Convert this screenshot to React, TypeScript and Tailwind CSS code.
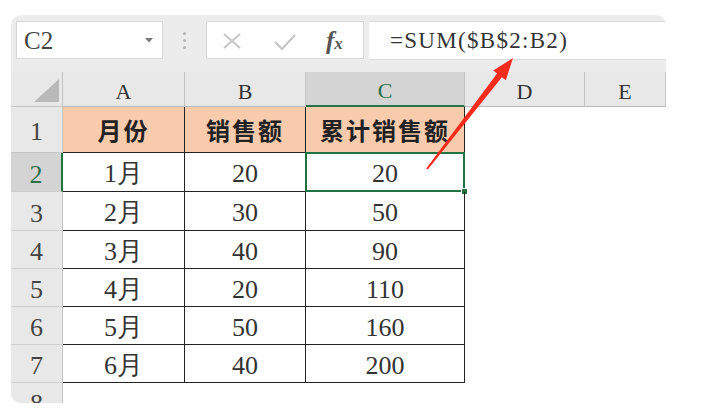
import React from 'react'

const COLS = ['A', 'B', 'C', 'D', 'E']

const ROWS: Array<{ n: number; cells: string[]; h: string }> = [
  { n: 2, cells: ['1月', '20', '20'], h: 'h-[39px]' },
  { n: 3, cells: ['2月', '30', '50'], h: 'h-[39px]' },
  { n: 4, cells: ['3月', '40', '90'], h: 'h-[38px]' },
  { n: 5, cells: ['4月', '20', '110'], h: 'h-[38px]' },
  { n: 6, cells: ['5月', '50', '160'], h: 'h-[38px]' },
  { n: 7, cells: ['6月', '40', '200'], h: 'h-[38px]' },
]

function RowHead({ n, active, h }: { n: number; active?: boolean; h: string }) {
  return (
    <div
      className={`${h} w-[52px] flex items-center justify-center border-b border-[#cfcfcf] ${
        active ? 'bg-[#d4d4d4] text-[#2b6e4b] border-r-2 border-r-[#217346]' : 'bg-[#e8e8e8] text-[#444] border-r border-r-[#c4c4c4]'
      }`}
    >
      <span className="pt-[4px] text-[26px] font-['Liberation_Serif']">{n}</span>
    </div>
  )
}

export default function App() {
  return (
    <div className="relative w-[709px] h-[415px] bg-white pl-[11px] pt-[15px] overflow-hidden font-['Liberation_Serif',serif]">
      <div className="w-[655px] h-[388px] rounded-[10px] overflow-hidden bg-[#ececec] flex flex-col">
        {/* toolbar */}
        <div className="h-[57px] shrink-0 flex items-start pt-[6px] pl-[5px]">
          <div className="w-[147px] h-[38px] bg-white border border-[#d6d6d6] flex items-center justify-between pl-[7px] pr-[9px]">
            <span className="text-[25px] text-[#444] pt-[2px] font-['Liberation_Serif']">C2</span>
            <svg width="8" height="5" viewBox="0 0 8 5">
              <path d="M0 0 L8 0 L4 4.5 Z" fill="#7a7a7a" />
            </svg>
          </div>
          <div className="w-[43px] h-[38px] flex flex-col items-center justify-center gap-[4px]">
            <div className="w-[3px] h-[3px] rounded-full bg-[#b5b5b5]" />
            <div className="w-[3px] h-[3px] rounded-full bg-[#b5b5b5]" />
            <div className="w-[3px] h-[3px] rounded-full bg-[#b5b5b5]" />
          </div>
          <div className="w-[158px] h-[38px] bg-white border border-[#d6d6d6] flex items-center pl-[15px]">
            <svg width="20" height="16" viewBox="0 0 20 16" className="mt-[2px]">
              <path d="M2 1 L18 15 M18 1 L2 15" stroke="#c6c6c6" strokeWidth="2" />
            </svg>
            <svg width="22" height="16" viewBox="0 0 22 16" className="ml-[32px] mt-[4px]">
              <path d="M1 8 L8 15 L21 1" stroke="#c6c6c6" strokeWidth="2.2" fill="none" />
            </svg>
            <span className="ml-[30px] italic font-bold text-[#555] leading-none font-['Liberation_Serif']">
              <span className="text-[25px]">f</span>
              <span className="text-[17px]">x</span>
            </span>
          </div>
          <div className="ml-[5px] flex-1 h-[39px] bg-white border-y border-[#dadada] flex items-center pl-[21px]">
            <span className="text-[23px] text-[#333] tracking-[1.3px] pt-[2px] font-['Liberation_Serif']">=SUM($B$2:B2)</span>
          </div>
        </div>

        {/* column headers */}
        <div className="h-[35px] shrink-0 flex">
          <div className="w-[52px] h-full bg-[#e8e8e8] border-r border-b border-[#c4c4c4] flex items-end justify-end pr-[3px] pb-[4px]">
            <svg width="25" height="23" viewBox="0 0 25 23">
              <path d="M25 0 L25 23 L0 23 Z" fill="#b9b9b9" />
            </svg>
          </div>
          {COLS.map((c) => {
            const w = c === 'A' ? 'w-[122px]' : c === 'B' ? 'w-[121px]' : c === 'C' ? 'w-[159px]' : c === 'D' ? 'w-[120px]' : 'flex-1'
            const active = c === 'C'
            return (
              <div
                key={c}
                className={`${w} h-full flex items-center justify-center ${
                  active
                    ? 'bg-[#d4d4d4] text-[#2b6e4b] border-b-2 border-b-[#217346] border-r border-r-[#c4c4c4]'
                    : 'bg-[#e8e8e8] text-[#333] border-b border-b-[#b8b8b8] border-r border-r-[#c4c4c4]'
                }`}
              >
                <span className="pt-[4px] text-[22px] font-['Liberation_Serif']">{c}</span>
              </div>
            )
          })}
        </div>

        {/* header row 1 */}
        <div className="h-[46px] shrink-0 flex bg-white">
          <div className="h-full w-[52px] bg-[#e8e8e8] border-r border-b border-[#c4c4c4] flex items-end justify-center pb-[1px]">
            <span className="text-[26px] text-[#444] font-['Liberation_Serif']">1</span>
          </div>
          {['月份', '销售额', '累计销售额'].map((t, i) => (
            <div
              key={t}
              className={`${i === 0 ? 'w-[122px]' : i === 1 ? 'w-[121px]' : 'w-[159px]'} h-full bg-[#f8cbad] border-r border-b border-[#222] flex items-center justify-center font-bold text-[24px] tracking-[2px] text-[#222] font-['Noto_Sans_CJK_SC']`}
            >
              {t}
            </div>
          ))}
          <div className="flex-1" />
        </div>

        {/* data rows */}
        {ROWS.map((r) => (
          <div key={r.n} className={`${r.h} shrink-0 flex bg-white`}>
            <RowHead n={r.n} active={r.n === 2} h={r.h} />
            {r.cells.map((v, i) => (
              <div
                key={i}
                className={`${i === 0 ? 'w-[122px]' : i === 1 ? 'w-[121px]' : 'w-[159px]'} h-full border-r border-b border-[#222] flex items-center justify-center text-[#333] relative`}
              >
                <span className="pt-[3px] text-[26px] font-['Liberation_Serif']">{v}</span>
                {r.n === 2 && i === 2 && (
                  <>
                    <div className="absolute -left-[1px] -top-[1px] -right-[1px] -bottom-[1px] border-2 border-[#217346]" />
                    <div className="absolute -right-[4px] -bottom-[4px] w-[7px] h-[7px] bg-[#217346] border border-white" />
                  </>
                )}
              </div>
            ))}
            <div className="flex-1" />
          </div>
        ))}

        {/* row 8 */}
        <div className="h-[38px] shrink-0 flex bg-white">
          <RowHead n={8} h="h-[38px]" />
          <div className="flex-1" />
        </div>
      </div>

      {/* red arrow */}
      <svg className="absolute left-0 top-0 pointer-events-none" width="709" height="415" viewBox="0 0 709 415">
        <path
          d="M513 58 L505.8 80.3 L501.9 77.2 L427.8 169.6 L426.2 168.4 L497.1 73.6 L493.2 70.5 Z"
          fill="#f32b1d"
        />
      </svg>
    </div>
  )
}
